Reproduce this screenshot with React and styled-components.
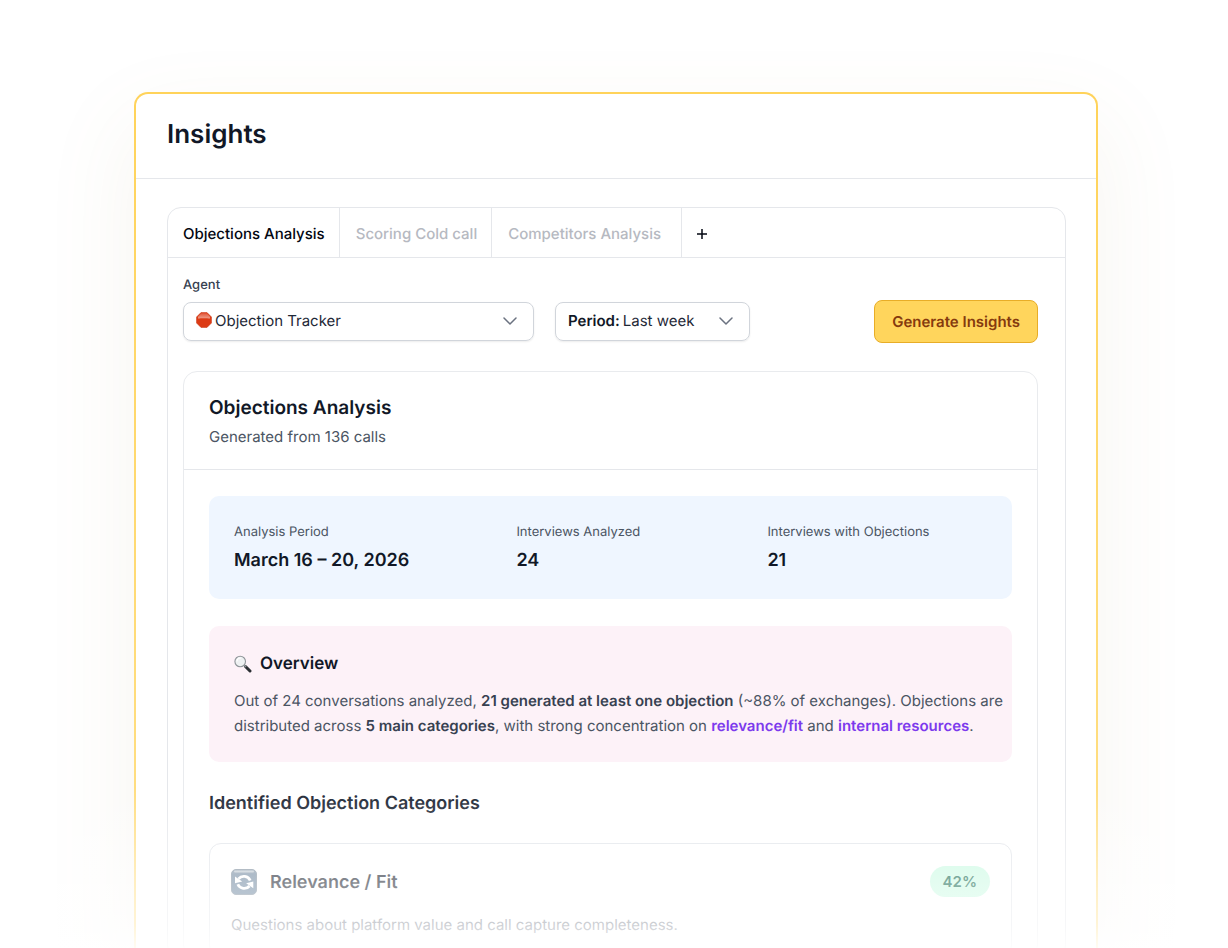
import React from "react";
import styled, { createGlobalStyle } from "styled-components";

const App = () => {
  return (
    <Page>
      <GlobalStyle />
      <Window>
        <WindowHeader>
          <Title>Insights</Title>
        </WindowHeader>
        <WindowBody>
          <Panel>
            <Tabs>
              <Tab $active>Objections Analysis</Tab>
              <Tab>Scoring Cold call</Tab>
              <Tab $wide>Competitors Analysis</Tab>
              <AddTab aria-label="Add tab">
                <PlusIcon />
              </AddTab>
            </Tabs>
            <PanelBody>
              <Filters>
                <Field>
                  <FieldLabel htmlFor="agent">Agent</FieldLabel>
                  <SelectBox $wide>
                    <StopIcon />
                    <Select id="agent">
                      <option>Objection Tracker</option>
                    </Select>
                    <ChevronIcon />
                  </SelectBox>
                </Field>
                <SelectBox>
                  <PeriodLabel htmlFor="period">Period:</PeriodLabel>
                  <Select id="period">
                    <option>Last week</option>
                  </Select>
                  <ChevronIcon />
                </SelectBox>
                <GenerateButton>Generate Insights</GenerateButton>
              </Filters>

              <Report>
                <ReportHeader>
                  <ReportTitle>Objections Analysis</ReportTitle>
                  <ReportSub>Generated from 136 calls</ReportSub>
                </ReportHeader>
                <ReportBody>
                  <Stats>
                    {stats.map((stat) => (
                      <div key={stat.label}>
                        <StatLabel>{stat.label}</StatLabel>
                        <StatValue>{stat.value}</StatValue>
                      </div>
                    ))}
                  </Stats>

                  <Overview>
                    <OverviewTitle>
                      <LoupeIcon />
                      Overview
                    </OverviewTitle>
                    <OverviewText>
                      Out of 24 conversations analyzed,{" "}
                      <b>21 generated at least one objection</b> (~88% of
                      exchanges). Objections are distributed across{" "}
                      <b>5 main categories</b>, with strong concentration on{" "}
                      <Mark>relevance/fit</Mark> and{" "}
                      <Mark>internal resources</Mark>.
                    </OverviewText>
                  </Overview>

                  <SectionTitle>Identified Objection Categories</SectionTitle>

                  <Category>
                    <CategoryTop>
                      <RefreshIcon />
                      <CategoryName>Relevance / Fit</CategoryName>
                      <Badge>42%</Badge>
                    </CategoryTop>
                    <CategoryText>
                      Questions about platform value and call capture
                      completeness.
                    </CategoryText>
                  </Category>
                </ReportBody>
              </Report>
            </PanelBody>
          </Panel>
        </WindowBody>
      </Window>
      <Fade />
    </Page>
  );
};

const stats = [
  { label: "Analysis Period", value: "March 16 – 20, 2026" },
  { label: "Interviews Analyzed", value: "24" },
  { label: "Interviews with Objections", value: "21" },
];

const PlusIcon = () => (
  <svg width="12" height="12" viewBox="0 0 12 12" fill="none">
    <path d="M6 1v10M1 6h10" stroke="#030712" strokeWidth="1.5" />
  </svg>
);

const ChevronIcon = () => (
  <svg width="14" height="8" viewBox="0 0 14 8" fill="none">
    <path
      d="M1 1l6 6 6-6"
      stroke="#6b7280"
      strokeWidth="1.5"
      strokeLinecap="round"
      strokeLinejoin="round"
    />
  </svg>
);

const StopIcon = () => (
  <svg width="16" height="18" viewBox="0 0 16 18">
    <defs>
      <linearGradient id="stopShine" x1="0" y1="0" x2="0" y2="1">
        <stop offset="0" stopColor="#e2573a" />
        <stop offset="1" stopColor="#ef9f8a" />
      </linearGradient>
    </defs>
    <path
      d="M5 .5h6L15.500 5v6L11 15.500H5L.5 11V5z"
      fill="#dc3a14"
      stroke="#c63412"
      strokeWidth=".5"
    />
    <path
      d="M5.300 1.300h5.400L14 4.700v1.900C11 6 5 6 2 6.600V4.700z"
      fill="url(#stopShine)"
    />
  </svg>
);

const LoupeIcon = () => (
  <svg width="18" height="18" viewBox="0 0 18 18" fill="none">
    <path
      d="M11.500 11.500l4.500 4.500"
      stroke="#2b2f33"
      strokeWidth="3"
      strokeLinecap="round"
    />
    <path d="M10 10l2 2" stroke="#8b9196" strokeWidth="1.600" />
    <circle
      cx="6.200"
      cy="6.500"
      r="5.300"
      fill="#eef1f2"
      stroke="#8f9599"
      strokeWidth="1.100"
    />
    <path
      d="M3 6a3.500 3.500 0 0 1 3.500-3"
      stroke="#fff"
      strokeWidth="1.200"
      strokeLinecap="round"
    />
  </svg>
);

const RefreshIcon = () => (
  <svg width="26" height="26" viewBox="0 0 26 26" fill="none">
    <defs>
      <linearGradient id="tile" x1="0" y1="0" x2="0" y2="1">
        <stop offset="0" stopColor="#8799aa" />
        <stop offset=".2" stopColor="#6c849c" />
        <stop offset="1" stopColor="#64809a" />
      </linearGradient>
    </defs>
    <rect
      x=".5"
      y=".5"
      width="25"
      height="25"
      rx="4.500"
      fill="url(#tile)"
      stroke="#7a8a9a"
    />
    <rect x="3" y="1.500" width="20" height="2" rx="1" fill="#b9c4cd" />
    <path
      d="M7.500 9.800A7 7 0 0 1 19.200 11.500M18.500 17A7 7 0 0 1 6.800 15.300"
      stroke="#fff"
      strokeWidth="2.800"
    />
    <path
      d="M4 7.500v6.800l7.200-1.800zM22.300 19.300v-6.800l-7.200 1.800z"
      fill="#fff"
    />
  </svg>
);

const GlobalStyle = createGlobalStyle`
  * {
    box-sizing: border-box;
  }
  body {
    margin: 0;
    background: #fff;
    font-family: Inter, "Liberation Sans", sans-serif;
    text-rendering: geometricPrecision;
  }
  h1, h2, h3, h4, p {
    margin: 0;
  }
  button, select {
    font-family: inherit;
    text-rendering: inherit;
  }
`;

const Page = styled.div`
  position: relative;
  height: 100vh;
  overflow: hidden;
  padding: 92px 130px 0 134px;
`;
const Window = styled.main`
  min-height: 100%;
  border: 2px solid transparent;
  border-radius: 14px;
  background:
    linear-gradient(#fff, #fff) padding-box,
    linear-gradient(#ffd35a, #ffe08a) border-box;
  box-shadow: 0 36px 90px 8px rgb(150 130 70 / 7%);
`;
const WindowHeader = styled.header`
  padding: 25px 31px 27px;
  border-bottom: 1px solid #e5e7eb;
`;
const Title = styled.h1`
  font-size: 26px;
  line-height: 32px;
  font-weight: 600;
  color: #111827;
`;
const WindowBody = styled.div`
  padding: 28px 30px 0 31px;
`;
const Panel = styled.section`
  border: 1px solid #e5e7eb;
  border-radius: 14px;
`;
const Tabs = styled.nav`
  display: flex;
  height: 50px;
  border-bottom: 1px solid #e5e7eb;
`;
const Tab = styled.button`
  padding: 1px ${(props) => (props.$wide ? "20px" : "14px")} 0
    ${(props) => (props.$active ? "15px" : "16px")};
  border: none;
  border-right: 1px solid #e5e7eb;
  background: none;
  font-size: 15px;
  font-weight: 500;
  color: ${(props) => (props.$active ? "#030712" : "#b6b9c1")};
  cursor: pointer;
`;
const AddTab = styled.button`
  display: flex;
  align-items: center;
  padding: 2px 14px 0;
  border: none;
  background: none;
  cursor: pointer;
`;
const PanelBody = styled.div`
  padding: 18px 27px 0 15px;
`;
const Filters = styled.div`
  display: flex;
  align-items: flex-end;
  gap: 21px;
`;
const Field = styled.div`
  display: flex;
  flex-direction: column;
  gap: 8px;
`;
const FieldLabel = styled.label`
  font-size: 13px;
  line-height: 18px;
  font-weight: 500;
  color: #374151;
`;
const SelectBox = styled.div`
  display: flex;
  align-items: center;
  gap: 3px;
  width: ${(props) => (props.$wide ? "351px" : "195px")};
  height: 39px;
  padding: 0 16px 1px 12px;
  margin-bottom: 2px;
  border: 1px solid #d1d5db;
  border-radius: 8px;
  box-shadow: 0 1px 2px rgb(0 0 0 / 8%);
`;
const Select = styled.select`
  appearance: none;
  flex: 1;
  min-width: 0;
  padding: 0;
  border: none;
  background: none;
  font-size: 15px;
  line-height: 22px;
  color: #1f2937;
`;
const PeriodLabel = styled.label`
  font-size: 15px;
  line-height: 22px;
  font-weight: 600;
  color: #111827;
`;
const GenerateButton = styled.button`
  height: 43px;
  margin-left: auto;
  padding: 0 17px;
  border: 1px solid #e8ad27;
  border-radius: 8px;
  background: #ffd55c;
  font-size: 15px;
  font-weight: 600;
  color: #853a0e;
  cursor: pointer;
`;
const Report = styled.article`
  margin-top: 28px;
  border: 1px solid #e9ebee;
  border-radius: 14px;
`;
const ReportHeader = styled.header`
  padding: 22px 25px 21px;
  border-bottom: 1px solid #e5e7eb;
`;
const ReportTitle = styled.h2`
  font-size: 19px;
  line-height: 28px;
  font-weight: 600;
  color: #111827;
`;
const ReportSub = styled.p`
  padding-top: 4px;
  font-size: 15px;
  line-height: 22px;
  color: #4b5563;
`;
const ReportBody = styled.div`
  padding: 26px 25px 0;
`;
const Stats = styled.div`
  display: grid;
  grid-template-columns: 9fr 8fr 7fr;
  padding: 26px 25px 24px;
  border-radius: 10px;
  background: #eff6ff;
`;
const StatLabel = styled.p`
  font-size: 13px;
  line-height: 20px;
  color: #4b5563;
`;
const StatValue = styled.p`
  padding-top: 5px;
  font-size: 18px;
  line-height: 28px;
  font-weight: 600;
  color: #111827;
`;
const Overview = styled.section`
  margin-top: 27px;
  padding: 25px 8px 24px 25px;
  border-radius: 10px;
  background: #fdf2f8;
`;
const OverviewTitle = styled.h3`
  display: flex;
  align-items: center;
  gap: 8px;
  font-size: 17px;
  line-height: 26px;
  font-weight: 600;
  color: #111827;
`;
const OverviewText = styled.p`
  padding-top: 11px;
  font-size: 15px;
  line-height: 25px;
  color: #4b5563;
  b {
    font-weight: 600;
    color: #374151;
  }
`;
const Mark = styled.span`
  font-weight: 600;
  color: #7c3aed;
`;
const SectionTitle = styled.h3`
  margin-top: 28px;
  font-size: 18px;
  line-height: 28px;
  font-weight: 600;
  color: #1f2937;
`;
const Category = styled.section`
  margin-top: 25px;
  padding: 21px 21px;
  border: 1px solid #e2e5ea;
  border-radius: 12px;
`;
const CategoryTop = styled.div`
  display: flex;
  align-items: center;
  gap: 13px;
`;
const CategoryName = styled.h4`
  padding-top: 3px;
  font-size: 18px;
  line-height: 30px;
  font-weight: 600;
  color: #111827;
`;
const Badge = styled.span`
  margin-left: auto;
  padding: 0 13px;
  border-radius: 16px;
  background: #c9fae2;
  font-size: 15px;
  line-height: 31px;
  font-weight: 600;
  color: #065f46;
`;
const CategoryText = styled.p`
  padding-top: 16px;
  font-size: 15px;
  line-height: 22px;
  color: #6b7280;
`;
const Fade = styled.div`
  position: absolute;
  left: 0;
  right: 0;
  bottom: 0;
  height: 160px;
  background: linear-gradient(
    rgb(255 255 255 / 0%),
    rgb(255 255 255 / 50%) 60%,
    rgb(255 255 255 / 66%) 85%,
    rgb(255 255 255 / 90%)
  );
  pointer-events: none;
`;

export default App;
